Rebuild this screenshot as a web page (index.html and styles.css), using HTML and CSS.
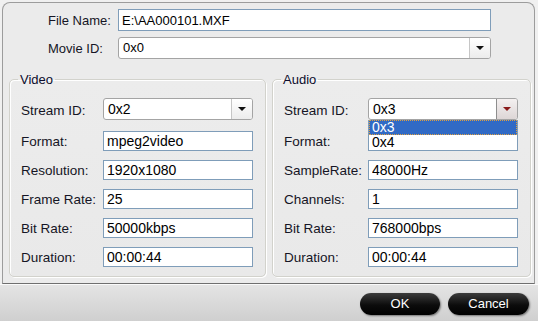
FILE: index.html
```html
<!DOCTYPE html>
<html lang="en">
<head>
  <meta charset="UTF-8">
  <title>Stream Info</title>
  <link rel="stylesheet" href="styles.css">
</head>
<body>

<div class="panel">
  <div class="file-info">
    <label>File Name:</label>
    <input type="text" class="field" value="E:\AA000101.MXF">
    <label>Movie ID:</label>
    <div class="select">
      <span class="select-value">0x0</span>
      <span class="select-arrow"></span>
    </div>
  </div>

  <div class="streams">
    <fieldset class="group video">
      <legend>Video</legend>
      <label>Stream ID:</label>
      <div class="select">
        <span class="select-value">0x2</span>
        <span class="select-arrow"></span>
      </div>
      <label>Format:</label>
      <input type="text" class="field" value="mpeg2video">
      <label>Resolution:</label>
      <input type="text" class="field" value="1920x1080">
      <label>Frame Rate:</label>
      <input type="text" class="field" value="25">
      <label>Bit Rate:</label>
      <input type="text" class="field" value="50000kbps">
      <label>Duration:</label>
      <input type="text" class="field" value="00:00:44">
    </fieldset>

    <fieldset class="group audio">
      <legend>Audio</legend>
      <label>Stream ID:</label>
      <div class="select open">
        <span class="select-value">0x3</span>
        <span class="select-arrow"></span>
        <ul class="dropdown">
          <li class="selected">0x3</li>
          <li>0x4</li>
        </ul>
      </div>
      <label>Format:</label>
      <input type="text" class="field" value="">
      <label>SampleRate:</label>
      <input type="text" class="field" value="48000Hz">
      <label>Channels:</label>
      <input type="text" class="field" value="1">
      <label>Bit Rate:</label>
      <input type="text" class="field" value="768000bps">
      <label>Duration:</label>
      <input type="text" class="field" value="00:00:44">
    </fieldset>
  </div>
</div>

<div class="footer">
  <button class="btn ok">OK</button>
  <button class="btn cancel">Cancel</button>
</div>

</body>
</html>
```

FILE: styles.css
```css
body {
  margin: 0;
  font-family: "Liberation Sans", Arial, sans-serif;
  font-size: 13px;
  color: #151525;
  background-color: #f0f0f0;
  width: 538px;
  height: 321px;
  overflow: hidden;
}

.panel {
  margin: 2px 3px 0 2px;
  height: 280px;
  border: 1px solid #9c9c9c;
  border-bottom: 1px solid #6f6f6f;
  border-radius: 8px 8px 0 0;
  background-color: #ebebeb;
}

.file-info {
  display: grid;
  grid-template-columns: 70px 373px;
  row-gap: 6px;
  align-items: center;
  padding: 6px 0 0 45px;
}

label {
  line-height: 15px;
}

.field {
  height: 20px;
  margin: 0;
  padding: 0 3px;
  border: 1px solid #7f9db9;
  background-color: #fff;
  font-family: "Liberation Sans", Arial, sans-serif;
  font-size: 14px;
  color: #000;
  box-sizing: border-box;
  width: 100%;
}

.file-info .field {
  height: 22px;
  font-size: 13px;
}

.select {
  position: relative;
  display: flex;
  height: 22px;
  border: 1px solid #a4a4a4;
  border-radius: 3px;
  background-color: #fff;
  box-sizing: border-box;
}

.select-value {
  flex: 1;
  padding-left: 4px;
  line-height: 20px;
  color: #000;
}

.select-arrow {
  position: relative;
  width: 20px;
  border-left: 1px solid #c6c6c6;
  border-radius: 0 2px 2px 0;
  background: linear-gradient(#ffffff, #ececec);
}

.select-arrow::after {
  content: "";
  position: absolute;
  left: 6px;
  top: 8px;
  border-left: 4px solid transparent;
  border-right: 4px solid transparent;
  border-top: 4px solid #111;
}

.select.open .select-arrow {
  border-left-color: #8e8e8e;
  background: linear-gradient(#f4f0f0, #ddd6d6);
}

.select.open .select-arrow::after {
  border-top-color: #8a1a1a;
}

.dropdown {
  position: absolute;
  top: 21px;
  left: -1px;
  right: -1px;
  margin: 0;
  padding: 0;
  list-style: none;
  border: 1px solid #7f9db9;
  border-top: none;
  background-color: #fff;
  color: #000;
  z-index: 2;
}

.dropdown li {
  height: 15px;
  line-height: 15px;
  padding-left: 3px;
  font-size: 14px;
  overflow: hidden;
}

.dropdown li.selected {
  background-color: #316ac5;
  color: #fff;
  outline: 1px dotted #e0a040;
  outline-offset: -1px;
}

.streams {
  display: flex;
  gap: 6px;
  padding: 13px 0 0 6px;
}

.group {
  display: grid;
  row-gap: 9px;
  align-items: center;
  margin: 0;
  padding: 11px 11px 9px 11px;
  border: 1px solid #d2d2cc;
  border-radius: 5px;
  box-shadow: inset 1px 1px 0 #fff, 1px 1px 0 #fff;
  background: linear-gradient(#ececec, #e9e9e9);
  box-sizing: border-box;
}

.group label {
  font-size: 13.5px;
}

.group .select-value {
  font-size: 14px;
}

.group.video {
  width: 257px;
  grid-template-columns: 82px 150px;
}

.group.audio {
  width: 259px;
  grid-template-columns: 84px 150px;
}

.group .select {
  margin-bottom: 2px;
}

legend {
  margin-left: -3px;
  padding: 0 2px;
  line-height: 15px;
  color: #0d0d2d;
}

.footer {
  display: flex;
  justify-content: flex-end;
  align-items: center;
  gap: 8px;
  height: 37px;
  padding: 1px 9px 0 0;
  box-sizing: border-box;
  background: linear-gradient(#e4e4e4, #cfcfcf);
  border-top: 1px solid #fafafa;
}

.btn {
  height: 22px;
  border: none;
  border-radius: 11px;
  background: linear-gradient(#3c3c3c, #0c0c0c 55%, #000);
  box-shadow: 1px 1px 2px rgba(0, 0, 0, 0.45);
  color: #fff;
  font-family: "Liberation Sans", Arial, sans-serif;
  font-size: 13px;
  cursor: pointer;
}

.btn.ok {
  width: 80px;
}

.btn.cancel {
  width: 81px;
}
```
